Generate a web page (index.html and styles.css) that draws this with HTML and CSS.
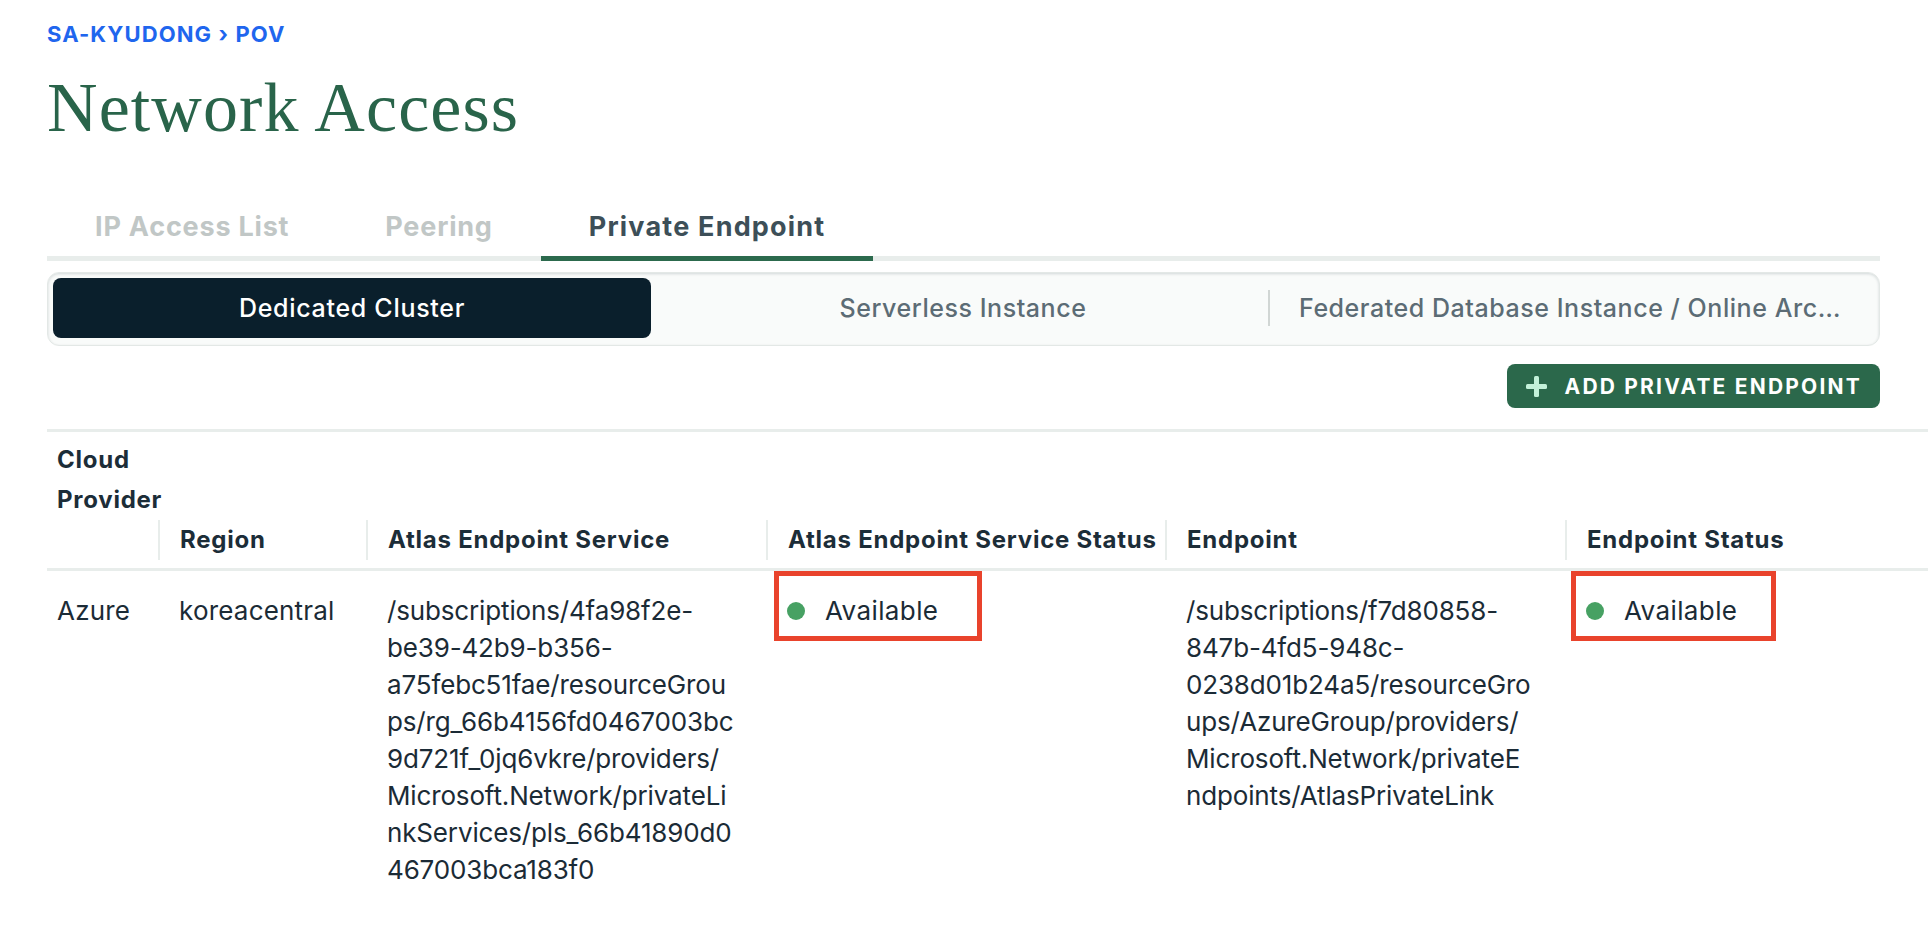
FILE: index.html
```html
<!DOCTYPE html>
<html lang="en">
<head>
<meta charset="utf-8">
<title>Network Access</title>
<link rel="stylesheet" href="styles.css">
</head>
<body>
<main class="page">
  <nav class="breadcrumb">SA-KYUDONG <span class="chev">›</span> POV</nav>
  <h1 class="title">Network Access</h1>

  <div class="tabs">
    <div class="tab">IP Access List</div>
    <div class="tab">Peering</div>
    <div class="tab tab-active">Private Endpoint</div>
  </div>

  <div class="segmented">
    <div class="seg seg-active">Dedicated Cluster</div>
    <div class="seg-gap"></div>
    <div class="seg">Serverless Instance</div>
    <div class="seg-gap"><span class="seg-divider"></span></div>
    <div class="seg"><span class="seg-text">Federated Database Instance / Online Archive</span></div>
  </div>

  <div class="actions">
    <div class="btn">
      <svg class="btn-icon" width="21" height="21" viewBox="0 0 21 21" aria-hidden="true">
        <rect x="8" y="0" width="5" height="21" rx="1.5" fill="#c3f1d9"/>
        <rect x="0" y="8" width="21" height="5" rx="1.5" fill="#c3f1d9"/>
      </svg>
      <span>ADD PRIVATE ENDPOINT</span>
    </div>
  </div>

  <table class="grid">
    <colgroup>
      <col class="c1"><col class="c2"><col class="c3"><col class="c4"><col class="c5"><col class="c6">
    </colgroup>
    <thead>
      <tr>
        <th class="first"><div class="th-inner">Cloud<br>Provider</div></th>
        <th><div class="th-inner">Region</div></th>
        <th><div class="th-inner">Atlas Endpoint Service</div></th>
        <th><div class="th-inner">Atlas Endpoint Service Status</div></th>
        <th><div class="th-inner">Endpoint</div></th>
        <th><div class="th-inner">Endpoint Status</div></th>
      </tr>
    </thead>
    <tbody>
      <tr>
        <td class="first">Azure</td>
        <td>koreacentral</td>
        <td class="path">/subscriptions/4fa98f2e-<br>be39-42b9-b356-<br>a75febc51fae/resourceGrou<br>ps/rg_66b4156fd0467003bc<br>9d721f_0jq6vkre/providers/<br>Microsoft.Network/privateLi<br>nkServices/pls_66b41890d0<br>467003bca183f0</td>
        <td class="status-cell">
          <div class="status"><span class="dot"></span>Available</div>
          <span class="callout"></span>
        </td>
        <td class="path">/subscriptions/f7d80858-<br>847b-4fd5-948c-<br>0238d01b24a5/resourceGro<br>ups/AzureGroup/providers/<br>Microsoft.Network/privateE<br>ndpoints/AtlasPrivateLink</td>
        <td class="status-cell">
          <div class="status"><span class="dot"></span>Available</div>
          <span class="callout callout-b"></span>
        </td>
      </tr>
    </tbody>
  </table>
</main>
</body>
</html>
```

FILE: styles.css
```css
html, body {
  margin: 0;
  padding: 0;
  background: #ffffff;
  overflow: hidden;
}

body {
  font-family: Inter, "Liberation Sans", sans-serif;
  color: #1b2b36;
}

.page {
  padding: 20px 48px 0 47px;
}

.breadcrumb {
  font-size: 22px;
  line-height: 28px;
  font-weight: 700;
  letter-spacing: 1.1px;
  color: #1f66ee;
}

.chev {
  font-weight: 700;
}

.title {
  margin: 20px 0 0;
  font-family: "Liberation Serif", "Times New Roman", serif;
  font-weight: 400;
  font-size: 70px;
  line-height: 80px;
  letter-spacing: 1.1px;
  color: #29644a;
}

.tabs {
  display: flex;
  margin-top: 61px;
  border-bottom: 5px solid #e8edeb;
}

.tab {
  padding: 0 48px 11px;
  margin-bottom: -5px;
  border-bottom: 5px solid transparent;
  font-size: 27px;
  line-height: 36px;
  font-weight: 700;
  letter-spacing: 0.8px;
  color: #c1c7c6;
}

.tab-active {
  color: #3d4f58;
  border-bottom-color: #2c6a4d;
  letter-spacing: 1.2px;
}

.segmented {
  display: flex;
  margin-top: 11px;
  height: 74px;
  box-sizing: border-box;
  padding: 5px 6px 7px 5px;
  background: #f9fbfa;
  border: 1px solid #e3e8e6;
  border-radius: 12px;
  box-shadow: inset 0 1px 3px rgba(0, 30, 43, 0.16);
}

.seg {
  flex: 1 1 0;
  min-width: 0;
  display: flex;
  align-items: center;
  justify-content: center;
  padding: 0 24px;
  border-radius: 8px;
  font-size: 25px;
  font-weight: 500;
  letter-spacing: 0.55px;
  color: #5c6c75;
}

.seg-active {
  background: #0a1f2c;
  color: #ffffff;
  letter-spacing: 0.7px;
}

.seg-gap {
  flex: 0 0 13px;
  display: flex;
  align-items: center;
  justify-content: center;
}

.seg-divider {
  display: block;
  width: 2px;
  height: 36px;
  background: #d1d6d4;
}

.seg-text {
  display: block;
  overflow: hidden;
  white-space: nowrap;
  text-overflow: ellipsis;
}

.actions {
  display: flex;
  justify-content: flex-end;
  margin-top: 18px;
}

.btn {
  display: flex;
  align-items: center;
  gap: 18px;
  height: 44px;
  padding: 0 18px 0 19px;
  border-radius: 8px;
  background: #2b684b;
  color: #ffffff;
  font-size: 21px;
  font-weight: 700;
  letter-spacing: 2.2px;
}

.btn-icon {
  display: block;
  flex: none;
}

.grid {
  margin-top: 21px;
  width: calc(100% + 48px);
  border-collapse: collapse;
  table-layout: fixed;
}

.c1 { width: 111px; }
.c2 { width: 208px; }
.c3 { width: 400px; }
.c4 { width: 399px; }
.c5 { width: 400px; }
.c6 { width: auto; }

.grid th {
  padding: 8px 0;
  border-top: 3px solid #e8edeb;
  border-bottom: 3px solid #e8edeb;
  vertical-align: bottom;
  text-align: left;
  font-size: 24px;
  line-height: 40px;
  font-weight: 700;
  letter-spacing: 0.75px;
  color: #1c2d38;
}

.th-inner {
  border-left: 2px solid #e8edeb;
  padding-left: 20px;
  white-space: nowrap;
}

.grid th.first {
  vertical-align: top;
}

.grid th.first .th-inner {
  border-left: 0;
  padding-left: 10px;
  height: 120px;
}

.grid td {
  position: relative;
  padding: 21px 16px 20px 21px;
  vertical-align: top;
  font-size: 26px;
  line-height: 37px;
  letter-spacing: 0.2px;
  color: #1b2b36;
}

.grid td.first {
  padding-left: 10px;
}

.grid td.path {
  white-space: nowrap;
  letter-spacing: -0.15px;
}

.status {
  display: flex;
  align-items: center;
  gap: 20px;
  letter-spacing: 0.4px;
}

.dot {
  display: block;
  flex: none;
  width: 18px;
  height: 18px;
  border-radius: 50%;
  background: #47a163;
}

.callout {
  position: absolute;
  left: 8px;
  top: 0;
  width: 208px;
  height: 70px;
  box-sizing: border-box;
  border: 5px solid #e9432c;
}

.callout-b {
  left: 6px;
  width: 205px;
}
```
